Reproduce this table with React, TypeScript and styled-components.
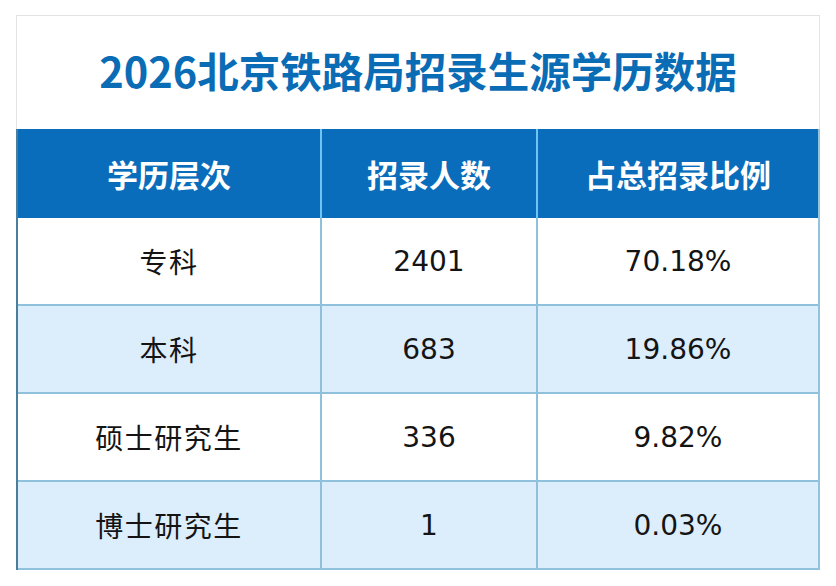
import React from "react";
import styled, { createGlobalStyle } from "styled-components";

const Global = createGlobalStyle`
  html, body { margin: 0; padding: 0; background: #ffffff; }
  body { font-family: "Noto Sans CJK SC", "Noto Sans", sans-serif; }
`;

const Page = styled.div`
  padding: 15px 0 0 16px;
`;

const Card = styled.div`
  width: 804px;
  box-sizing: border-box;
  border: 1px solid #e3e3e3;
  border-bottom: none;
  background: #fff;
`;

const Title = styled.h1`
  margin: 0;
  height: 113px;
  box-sizing: border-box;
  padding-bottom: 5px;
  display: flex;
  align-items: center;
  justify-content: center;
  font-family: "Noto Sans CJK SC", sans-serif;
  font-weight: 700;
  font-size: 41.5px;
  color: #0b6cb6;
`;

const Table = styled.div`
  display: grid;
  grid-template-columns: 304px 216px 1fr;
  margin: 0 -1px;
  border-left: 2px solid #4a7e9c;
  border-right: 2px solid #93c4de;
`;

const HeadCell = styled.div<{ $last?: boolean }>`
  height: 89px;
  display: flex;
  align-items: center;
  justify-content: center;
  background: #0a6dbb;
  color: #ffffff;
  font-family: "Noto Sans CJK SC", sans-serif;
  font-weight: 700;
  font-size: 31px;
  box-sizing: border-box;
  border-right: ${(p) => (p.$last ? "none" : "2px solid #6fc4f4")};
`;

const Cell = styled.div<{ $alt?: boolean; $last?: boolean }>`
  height: 88px;
  box-sizing: border-box;
  display: flex;
  align-items: center;
  justify-content: center;
  background: ${(p) => (p.$alt ? "#dcedfb" : "#ffffff")};
  color: #141414;
  font-family: "DejaVu Sans", "Noto Sans CJK SC", sans-serif;
  font-size: 28px;
  border-right: ${(p) => (p.$last ? "none" : "2px solid #8fc0dc")};
  border-bottom: 2px solid #8fc0dc;
`;

const CjkText = styled.span`
  font-family: "Noto Sans CJK SC", sans-serif;
  letter-spacing: 1.5px;
`;

const rows = [
  ["专科", "2401", "70.18%"],
  ["本科", "683", "19.86%"],
  ["硕士研究生", "336", "9.82%"],
  ["博士研究生", "1", "0.03%"],
];

export default function App() {
  return (
    <Page>
      <Global />
      <Card>
        <Title>2026北京铁路局招录生源学历数据</Title>
        <Table>
          <HeadCell>学历层次</HeadCell>
          <HeadCell>招录人数</HeadCell>
          <HeadCell $last>占总招录比例</HeadCell>
          {rows.map((r, i) => (
            <React.Fragment key={r[0]}>
              <Cell $alt={i % 2 === 1}>
                <CjkText>{r[0]}</CjkText>
              </Cell>
              <Cell $alt={i % 2 === 1}>{r[1]}</Cell>
              <Cell $alt={i % 2 === 1} $last>
                {r[2]}
              </Cell>
            </React.Fragment>
          ))}
        </Table>
      </Card>
    </Page>
  );
}
